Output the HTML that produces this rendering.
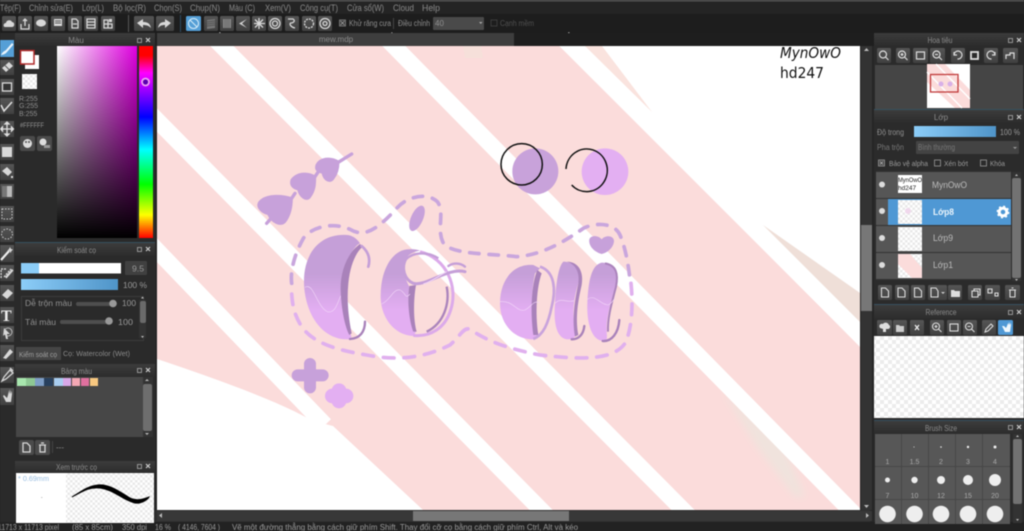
<!DOCTYPE html>
<html><head><meta charset="utf-8"><title>mew.mdp</title>
<style>
html,body{margin:0;padding:0;background:#242424;overflow:hidden;width:1024px;height:531px}
svg{display:block;position:absolute;left:0;top:0;filter:blur(.5px)}
text{font-family:"Liberation Sans","Noto Sans CJK SC",sans-serif;font-size:8.5px;fill:#8f8f8f}
.m{font-size:9px;fill:#8a8a8a}
.h{font-size:8px;fill:#8a8a8a;text-anchor:middle}
.i{fill:#d8d8d8}
.s{fill:none;stroke:#d8d8d8;stroke-width:1.3}
</style></head><body>
<svg width="1024" height="531" viewBox="0 0 1024 531" xmlns="http://www.w3.org/2000/svg">
<defs>
<pattern id="ck" width="8" height="8" patternUnits="userSpaceOnUse"><rect width="8" height="8" fill="#fff"/><rect width="4" height="4" fill="#ececec"/><rect x="4" y="4" width="4" height="4" fill="#ececec"/></pattern>
<pattern id="ck2" width="5" height="5" patternUnits="userSpaceOnUse"><rect width="5" height="5" fill="#fff"/><rect width="2.5" height="2.5" fill="#e8e8e8"/><rect x="2.5" y="2.5" width="2.5" height="2.5" fill="#e8e8e8"/></pattern>
<linearGradient id="sv1"><stop offset="0" stop-color="#fff"/><stop offset="1" stop-color="#e000e0"/></linearGradient>
<linearGradient id="sv2" x2="0" y2="1"><stop offset="0" stop-color="#000" stop-opacity="0"/><stop offset="1" stop-color="#000"/></linearGradient>
<linearGradient id="hue" x2="0" y2="1"><stop offset="0" stop-color="#f00"/><stop offset=".05" stop-color="#f00"/><stop offset=".14" stop-color="#f0f"/><stop offset=".37" stop-color="#00f"/><stop offset=".54" stop-color="#0ff"/><stop offset=".72" stop-color="#0f0"/><stop offset=".88" stop-color="#ff0"/><stop offset="1" stop-color="#f00"/></linearGradient>
<linearGradient id="blu"><stop offset="0" stop-color="#8ccdf8"/><stop offset="1" stop-color="#4f94c8"/></linearGradient>
<linearGradient id="hd" x2="0" y2="1"><stop offset="0" stop-color="#3c3c3c"/><stop offset="1" stop-color="#2c2c2c"/></linearGradient>
<linearGradient id="lil" gradientUnits="userSpaceOnUse" x1="0" y1="400" x2="0" y2="510"><stop offset="0" stop-color="#c59fd8"/><stop offset="1" stop-color="#e3aef2"/></linearGradient>
<linearGradient id="btn" x2="0" y2="1"><stop offset="0" stop-color="#555"/><stop offset="1" stop-color="#414141"/></linearGradient>
<filter id="sf" x="-30%" y="-30%" width="160%" height="160%"><feGaussianBlur stdDeviation="4"/></filter>
</defs>

<rect width="1024" height="531" fill="#262626"/>
<!-- menu -->
<rect width="1024" height="1.5" fill="#555"/>
<rect y="1.5" width="1024" height="12.5" fill="#242424"/>
<text class="m" x="0" y="11" textLength="21" lengthAdjust="spacingAndGlyphs">Tệp(F)</text>
<text class="m" x="29" y="11" textLength="44" lengthAdjust="spacingAndGlyphs">Chỉnh sửa(E)</text>
<text class="m" x="82" y="11" textLength="22" lengthAdjust="spacingAndGlyphs">Lớp(L)</text>
<text class="m" x="113" y="11" textLength="33" lengthAdjust="spacingAndGlyphs">Bộ lọc(R)</text>
<text class="m" x="154" y="11" textLength="28" lengthAdjust="spacingAndGlyphs">Chọn(S)</text>
<text class="m" x="190" y="11" textLength="30" lengthAdjust="spacingAndGlyphs">Chụp(N)</text>
<text class="m" x="229" y="11" textLength="26" lengthAdjust="spacingAndGlyphs">Màu (C)</text>
<text class="m" x="265" y="11" textLength="26" lengthAdjust="spacingAndGlyphs">Xem(V)</text>
<text class="m" x="300" y="11" textLength="38" lengthAdjust="spacingAndGlyphs">Công cụ(T)</text>
<text class="m" x="347" y="11" textLength="37" lengthAdjust="spacingAndGlyphs">Cửa sổ(W)</text>
<text class="m" x="393" y="11" textLength="21" lengthAdjust="spacingAndGlyphs">Cloud</text>
<text class="m" x="422" y="11" textLength="18" lengthAdjust="spacingAndGlyphs">Help</text>
<!-- toolbar -->
<rect y="14" width="1024" height="19" fill="#1d1d1d"/>
<g fill="url(#btn)">
<rect x="2" y="16" width="14" height="15" rx="1.5"/><rect x="18" y="16" width="14" height="15" rx="1.5"/><rect x="34" y="16" width="14" height="15" rx="1.5"/><rect x="51" y="16" width="14" height="15" rx="1.5"/><rect x="68" y="16" width="14" height="15" rx="1.5"/><rect x="84" y="16" width="14" height="15" rx="1.5"/><rect x="101" y="16" width="14" height="15" rx="1.5"/>
<rect x="134" y="16" width="20" height="15" rx="1.5"/><rect x="156" y="16" width="18" height="15" rx="1.5"/>
<rect x="204" y="16" width="14" height="15" rx="1.5"/><rect x="220" y="16" width="14" height="15" rx="1.5"/><rect x="236" y="16" width="14" height="15" rx="1.5"/><rect x="252" y="16" width="14" height="15" rx="1.5"/><rect x="268" y="16" width="14" height="15" rx="1.5"/><rect x="285" y="16" width="14" height="15" rx="1.5"/><rect x="302" y="16" width="14" height="15" rx="1.5"/><rect x="318" y="16" width="14" height="15" rx="1.5"/>
</g>
<rect x="128" y="15" width="1" height="17" fill="#555"/><rect x="180" y="15" width="1" height="17" fill="#2c4a60"/>
<rect x="186" y="16" width="15" height="15" rx="1.5" fill="#559fd6"/>
<circle cx="193.5" cy="23.5" r="5" fill="none" stroke="#d5ecfa" stroke-width="1"/><path d="M190 20l7 7" stroke="#d5ecfa" stroke-width="1"/>
<!-- toolbar icons -->
<path class="i" d="M5 27c-2 0-2-4 1-4 0-3 5-4 6-1 3 0 3 5 0 5z"/>
<path class="s" d="M21 24v5h8v-5M25 26v-7M23 21l2-2 2 2"/>
<ellipse class="i" cx="41" cy="23" rx="5" ry="3.6"/>
<path class="i" d="M54 19h8v7h-8z"/><path d="M55 21h6M55 23h6" stroke="#555" stroke-width="1"/>
<path class="s" d="M72 19h4l2 2v7h-6zM73 24h4"/>
<path class="s" d="M87 19h8v3h-8zM87 22h8v3h-8zM87 25h8v3h-8z"/>
<path class="s" d="M104 20h4v4h-4zM104 24h4v4h-4zM108 24h4v4h-4z"/><path class="i" d="M109 19h3v3h-3z"/>
<path class="i" d="M137 23l6-4v3c4 0 7 1 8 6-2-2-4-3-8-3v3z"/>
<path class="i" d="M171 23l-6-4v3c-4 0-6 1-7 6 2-2 3-3 7-3v3z"/>
<path d="M207 20l8-1v9l-8 1z" fill="#777"/><path d="M207 22l8-1M207 24l8-1M207 26l8-1" stroke="#555"/>
<path d="M223 19h8v9h-8z" fill="#888"/><path d="M225 19v9M227 19v9M229 19v9" stroke="#555" stroke-width=".6"/>
<path class="i" d="M247 19l-8 4.5 8 4.5-5-4.500z"/>
<path class="s" d="M259 18v11M254 23.5h11M255 19.5l8 8M263 19.5l-8 8" stroke-width="1"/>
<circle class="s" cx="275" cy="23.5" r="5"/><circle class="s" cx="275" cy="23.5" r="2.5"/>
<path class="s" d="M288 19h5c3 2 0 4-2 4s-1 4 4 5"/>
<circle cx="309" cy="23.5" r="4.5" fill="none" stroke="#d8d8d8" stroke-width="1.3" stroke-dasharray="2 1"/>
<circle class="s" cx="325" cy="23.5" r="5"/><circle class="s" cx="325" cy="23.5" r="2"/>
<rect x="339.5" y="20" width="6" height="6" fill="#333" stroke="#888" stroke-width=".8"/><path d="M340.5 21l4 4M344.5 21l-4 4" stroke="#aaa" stroke-width=".7"/>
<text x="349" y="26" style="font-size:8px" textLength="42" lengthAdjust="spacingAndGlyphs">Khử răng cưa</text>
<rect x="393" y="18" width="1" height="11" fill="#444"/>
<text x="398" y="26" style="font-size:8px" textLength="32" lengthAdjust="spacingAndGlyphs">Điều chỉnh</text>
<rect x="433" y="17" width="51" height="13" rx="1" fill="#4a4a4a"/>
<text x="435" y="26" style="font-size:8px">40</text><path d="M479 22h3.500l-1.750 2z" fill="#aaa"/>
<rect x="491" y="20" width="6" height="6" fill="none" stroke="#444" stroke-width=".8"/>
<text x="500" y="26" style="font-size:8px;fill:#505050" textLength="34" lengthAdjust="spacingAndGlyphs">Cạnh mềm</text>

<!-- CANVAS -->
<rect x="157" y="46" width="703" height="464" fill="#fff"/>
<path d="M157 46H563L860 347V510H423L333 426 313 421C285 405 235 385 157 359Z" fill="#fbdcdb"/>
<path d="M585 46H602L652 112Z" fill="#fae3de"/>
<path d="M763 225L860 293V322Z" fill="#efdfd8"/>
<path d="M722 390L785 447 805 497 795 497 757 447Z" fill="#f0e3dd" filter="url(#sf)"/>
<path d="M463 46H481L483 58 465 58Z" fill="#f6e0da"/>
<g stroke="#fff" stroke-width="16.5" fill="none">
<path d="M214 38L691 518"/>
<path d="M150 113L549 518"/>
<path d="M150 243L325 425"/>
<path d="M386 38L858 518"/>
<path d="M563 38L868 343"/>
</g>
<rect x="150" y="40" width="7" height="480" fill="#262626"/>
<rect x="860" y="40" width="14" height="480" fill="#262626"/>
<rect x="150" y="510" width="720" height="12" fill="#2f2f2f"/>
<!-- tab strip -->
<rect x="0" y="33" width="1024" height="13" fill="#1e1e1e"/>
<rect x="157" y="33" width="357" height="13" fill="#3e3e3e"/>
<text class="h" x="336" y="42">mew.mdp</text>

<text x="780" y="58" style="font-size:15px;fill:#111;font-family:'DejaVu Sans';font-style:italic" textLength="61" lengthAdjust="spacingAndGlyphs">MynOwO</text>
<text x="780" y="78" style="font-size:15px;fill:#111;font-family:'DejaVu Sans'" textLength="44" lengthAdjust="spacingAndGlyphs">hd247</text>

<!-- artwork in zoom coordinates -->
<g transform="translate(250 140) scale(.33333)">
<circle cx="856" cy="94" r="69" fill="#c8a2da"/>
<circle cx="815" cy="73" r="62" fill="none" stroke="#111" stroke-width="4.5"/>
<circle cx="1065" cy="95" r="70" fill="#e3aff2"/>
<path d="M948 87A62 64 0 1 1 965 135" fill="none" stroke="#111" stroke-width="4.5"/>
<g fill="#c7a1da" stroke="#c7a1da" stroke-width="7" stroke-linejoin="round">
<path d="M125 175C95 165 55 165 35 180 15 195 30 215 55 222 65 245 90 260 105 245 120 225 125 200 125 175Z"/>
<path d="M195 110C170 95 140 100 125 120 120 135 130 145 145 148 150 170 170 185 180 170 195 150 195 130 195 110Z"/>
<path d="M265 65C240 50 210 55 200 75 195 90 205 95 218 98 222 120 240 130 250 115 262 100 265 80 265 65Z"/>
</g>
<g fill="#c7a1da">
<path d="M1055 342C1030 335 1015 315 1018 298 1022 285 1045 285 1055 298 1065 285 1090 285 1092 302 1092 320 1075 338 1055 342Z"/>
<ellipse cx="501" cy="235" rx="18" ry="41" transform="rotate(24 501 235)"/>
</g>
<path d="M50 250L72 225M125 175L135 160M195 110L205 95M260 70L305 42" stroke="#c7a1da" stroke-width="10" stroke-linecap="round"/>
<path d="M180 672V742M143 706H218" stroke="#c7a1da" stroke-width="36" stroke-linecap="round"/>
<g fill="#e3aff2"><circle cx="267" cy="752" r="22"/><circle cx="267" cy="783" r="22"/><circle cx="247" cy="768" r="22"/><circle cx="288" cy="768" r="22"/></g>
<!-- dashed outline -->
<path d="M125 430C120 390 135 340 160 295 185 260 250 245 300 268 345 295 385 265 440 205 470 170 530 155 562 185 585 215 560 265 578 305 595 345 720 340 800 350 880 345 950 300 1000 265 1040 245 1095 250 1110 285 1125 320 1135 370 1140 420" fill="none" stroke="#c9a6dd" stroke-width="11" stroke-linecap="round" stroke-dasharray="28 30"/>
<path d="M1143 430C1150 500 1145 570 1125 610 1090 660 1000 660 870 645 770 625 715 605 660 568 640 560 630 590 600 615 530 650 450 665 350 645 260 630 190 610 155 560 130 520 127 490 125 460" fill="none" stroke="#e0b0ee" stroke-width="11" stroke-linecap="round" stroke-dasharray="32 30"/>
<!-- C -->
<path d="M290 285C210 280 160 340 162 430 165 520 215 600 295 598L305 590C280 540 265 450 285 385 295 350 315 315 330 310 320 295 305 285 290 285Z" fill="url(#lil)"/>
<path d="M330 312C290 340 270 400 272 450 274 510 285 560 298 585L305 580C295 530 290 480 295 430 300 380 315 340 338 320Z" fill="#a982ba"/>
<path d="M335 318C355 335 362 355 355 380" fill="none" stroke="#c59fd8" stroke-width="8" stroke-linecap="round"/>
<path d="M345 545C345 575 330 595 300 597" fill="none" stroke="#a982ba" stroke-width="7" stroke-linecap="round"/>
<!-- O -->
<path d="M470 328C420 335 390 400 392 475 394 530 430 585 490 588L498 575C480 560 470 490 478 440 468 420 455 395 462 365 470 345 490 335 510 332 500 328 485 326 470 328Z" fill="url(#lil)"/>
<path d="M478 438C470 490 480 550 490 575L500 575C490 540 490 480 498 435Z" fill="#a982ba"/>
<path d="M510 335C590 355 625 440 602 510 585 565 540 592 490 586" fill="none" stroke="#dcaaea" stroke-width="9"/>
<path d="M590 440C600 490 582 550 530 575" fill="none" stroke="#ab84bc" stroke-width="7"/>
<path d="M470 352C450 385 465 420 490 430 530 440 590 382 645 395" fill="none" stroke="#c59fd8" stroke-width="9" stroke-linecap="round"/>
<path d="M468 358C490 335 535 335 565 355" fill="none" stroke="#c59fd8" stroke-width="7"/>
<path d="M595 378C610 368 630 368 645 380" fill="none" stroke="#c59fd8" stroke-width="7" stroke-linecap="round"/>
<!-- a -->
<path d="M850 375C790 370 750 420 750 490 750 550 790 598 850 598L870 590C845 550 840 470 855 400L870 385Z" fill="url(#lil)"/>
<path d="M862 390C845 430 840 510 850 585L865 585C855 520 860 440 875 400Z" fill="#a982ba"/>
<path d="M870 380C915 395 918 450 905 500 895 550 880 585 850 597" fill="none" stroke="#c9a3dc" stroke-width="8"/>
<path d="M940 365C925 380 918 430 915 490 910 550 920 598 955 598 975 598 980 585 975 570 965 520 972 470 985 430 995 395 975 365 940 365Z" fill="url(#lil)"/>
<path d="M950 365C985 365 1002 395 995 435 985 480 975 530 985 585L975 590C965 530 975 480 985 430 990 395 975 372 950 365Z" fill="#ab84bc"/>
<path d="M1003 558C1000 585 985 598 965 598" fill="none" stroke="#a982ba" stroke-width="7" stroke-linecap="round"/>
<!-- i -->
<path d="M1055 368C1025 375 1015 420 1012 490 1010 550 1025 603 1062 603 1075 600 1070 590 1070 570 1068 530 1085 480 1098 430 1105 395 1090 368 1055 368Z" fill="url(#lil)"/>
<path d="M1065 370C1098 375 1106 400 1098 440 1088 480 1072 530 1074 575" fill="none" stroke="#ab84bc" stroke-width="6"/>
<path d="M1108 540C1105 580 1085 605 1058 603" fill="none" stroke="#a982ba" stroke-width="7" stroke-linecap="round"/>
<g fill="none" stroke="#f2d6f8" stroke-width="1.8">
<path d="M165 442C190 425 200 500 232 515 255 522 262 490 272 468"/>
<path d="M395 492C420 482 430 445 450 450 468 458 465 480 480 462"/>
<path d="M750 485C790 480 800 518 825 510 845 500 850 480 868 488"/>
<path d="M915 490C935 470 950 490 972 482M1012 478C1035 460 1050 495 1075 495 1085 490 1090 480 1095 475"/>
<path d="M520 432C545 425 570 405 590 395" stroke-width="3"/>
</g>
</g>

<!-- canvas scrollbars -->
<rect x="861" y="46" width="11" height="464" fill="#333"/>
<rect x="861" y="225" width="11" height="86" fill="#777"/>
<path d="M864 51h5l-2.5-3zM864 505h5l-2.5 3z" fill="#bbb"/>
<rect x="157" y="511" width="715" height="10" fill="#383838"/>
<rect x="413" y="511" width="156" height="10" fill="#777"/>
<path d="M162 513v5l-3-2.5zM866 513v5l3-2.5z" fill="#bbb"/>
<!-- status -->
<rect x="0" y="522" width="1024" height="9" fill="#222"/>
<text x="-2" y="530" style="font-size:8px;fill:#9a9a9a" textLength="61" lengthAdjust="spacingAndGlyphs">11713 x 11713 pixel</text>
<text x="72" y="530" style="font-size:8px;fill:#9a9a9a" textLength="41" lengthAdjust="spacingAndGlyphs">(85 x 85cm)</text>
<text x="122" y="530" style="font-size:8px;fill:#9a9a9a" textLength="25" lengthAdjust="spacingAndGlyphs">350 dpi</text>
<text x="155" y="530" style="font-size:8px;fill:#9a9a9a" textLength="16" lengthAdjust="spacingAndGlyphs">16 %</text>
<text x="178" y="530" style="font-size:8px;fill:#9a9a9a" textLength="42" lengthAdjust="spacingAndGlyphs">( 4146, 7604 )</text>
<text x="232" y="530" style="font-size:8px;fill:#9a9a9a" textLength="346" lengthAdjust="spacingAndGlyphs">Vẽ một đường thẳng bằng cách giữ phím Shift. Thay đổi cỡ cọ bằng cách giữ phím Ctrl, Alt và kéo</text>

<!-- LEFT TOOLS -->
<rect x="0" y="33" width="15" height="489" fill="#2a2a2a"/>
<g fill="url(#btn)">
<rect x="0" y="60" width="14" height="15"/><rect x="0" y="79" width="14" height="16"/><rect x="0" y="98" width="14" height="16"/><rect x="0" y="121" width="14" height="16"/><rect x="0" y="144" width="14" height="16"/><rect x="0" y="164" width="14" height="16"/><rect x="0" y="184" width="14" height="15"/><rect x="0" y="206" width="14" height="16"/><rect x="0" y="226" width="14" height="16"/><rect x="0" y="245" width="14" height="17"/><rect x="0" y="265" width="14" height="16"/><rect x="0" y="285" width="14" height="16"/><rect x="0" y="307" width="14" height="16"/><rect x="0" y="326" width="14" height="16"/><rect x="0" y="345" width="14" height="16"/><rect x="0" y="367" width="14" height="16"/><rect x="0" y="388" width="14" height="17"/>
</g>
<rect x="0" y="40" width="14" height="17" fill="#559fd6"/>
<path d="M1 55c2-4 4-4 5-5l6-7 1.500 1.500-6 7c-1 1-2 3-6.500 3.500z" fill="#e8f4fc"/>
<path d="M2 68l7-6 4 4-7 6z" class="i"/><path d="M5 65.500l4 4" stroke="#555"/>
<rect x="2.500" y="83" width="9" height="8" fill="#333" stroke="#ddd" stroke-width="1.300"/>
<path d="M1 105l3 6 8-9" fill="none" stroke="#ddd" stroke-width="1.600"/>
<path d="M7 123v12M1.500 129h11M7 122l-2 2h4zM7 136l-2-2h4zM0.500 129l2-2v4zM13.500 129l-2-2v4z" stroke="#ddd" fill="#ddd" stroke-width="1.300"/>
<rect x="2" y="147" width="10" height="10" class="i"/>
<path d="M2 171l5-4 5 5-4 4zM11 176h2v2h-2z" class="i"/>
<rect x="2" y="186" width="10" height="11" fill="#bbb"/><rect x="2" y="186" width="5" height="11" fill="#777"/>
<rect x="2" y="209" width="10" height="10" fill="none" stroke="#ccc" stroke-dasharray="1.500 1.500"/>
<ellipse cx="7" cy="234" rx="5.500" ry="5" fill="none" stroke="#ccc" stroke-dasharray="1.500 1.500"/>
<path d="M1 260l8-9" stroke="#eee" stroke-width="2.200"/><path d="M10 247l1 2 2 .5-1.500 1.500-1 2-1-2-2-.5 1.500-1.500z" class="i"/>
<path d="M1 278v-9h5M4 277l7-8" fill="none" stroke="#ddd" stroke-width="1.300" stroke-dasharray="2 1"/><path d="M5 277l7-8 1.500 1.500-7 8z" class="i"/>
<path d="M2 295l6-6 5 4-6 6z" class="i"/>
<text x="1" y="321" style="font-size:16px;font-weight:bold;fill:#eee;font-family:'Liberation Serif'">T</text>
<path d="M4 328l6 6-3 0 1 5-2 0-1-5-2 2z" class="i"/><circle cx="8" cy="332" r="4" fill="none" stroke="#ccc" stroke-width=".8"/>
<path d="M3 358l7-9 3 3-7 7z" class="i"/>
<path d="M2 381l2-4 6-7 3 3-7 6zM10 368l3 3" class="s"/>
<path d="M3 396l3 6h5l1-8v-3l-1 3v-4l-1 4v-5l-1 5v-4l-1 5-1 3-3-3z" class="i"/>

<!-- LEFT PANELS -->
<rect x="15" y="33" width="140" height="209" fill="#2a2a2a"/>
<rect x="15" y="33" width="140" height="13" fill="url(#hd)"/>
<text class="h" x="76" y="43">Màu</text>
<rect x="137.500" y="38.500" width="4" height="4" fill="none" stroke="#aaa" stroke-width=".8"/>
<path d="M146 38l4 4M150 38l-4 4" stroke="#ccc" stroke-width="1.2"/>
<rect x="25" y="55" width="14" height="14" fill="#fff"/>
<rect x="20.500" y="50.500" width="13.500" height="13.500" fill="#fff" stroke="#b02a2a" stroke-width="1.500"/>
<rect x="22" y="74" width="15" height="15" fill="url(#ck2)"/>
<text x="19" y="101" style="font-size:7px">R:255</text><text x="19" y="108" style="font-size:7px">G:255</text><text x="19" y="116" style="font-size:7px">B:255</text>
<text x="20" y="127.500" style="font-size:7px" textLength="24" lengthAdjust="spacingAndGlyphs">#FFFFFF</text>
<rect x="20" y="136" width="15" height="15" rx="2" fill="#4b4b4b"/><rect x="37" y="136" width="15" height="15" rx="2" fill="#4b4b4b"/>
<circle cx="27.500" cy="143.500" r="4.500" fill="#ddd"/><circle cx="26" cy="142" r="1" fill="#555"/><circle cx="29" cy="142" r="1" fill="#555"/><circle cx="43" cy="142" r="3.500" fill="#ddd"/><rect x="44" y="145" width="6" height="3" fill="#999"/>
<rect x="57" y="46" width="80" height="192" fill="url(#sv1)"/><rect x="57" y="46" width="80" height="192" fill="url(#sv2)"/>
<rect x="139" y="46" width="14" height="192" fill="url(#hue)"/>
<circle cx="145.500" cy="82" r="3.500" fill="#5a00b0" stroke="#f0a0f4" stroke-width="1.800"/>

<!-- brush control -->
<rect x="15" y="242" width="140" height="120" fill="#2a2a2a"/>
<rect x="15" y="243" width="140" height="13" fill="url(#hd)"/>
<rect x="15" y="242" width="140" height="1" fill="#36505f"/>
<text class="h" x="76.500" y="253" textLength="39" lengthAdjust="spacingAndGlyphs">Kiểm soát cọ</text>
<rect x="137.500" y="247.500" width="4" height="4" fill="none" stroke="#aaa" stroke-width=".8"/><path d="M146 247l4 4M150 247l-4 4" stroke="#ccc" stroke-width="1.2"/>
<rect x="21" y="263" width="100" height="10.500" fill="#fff"/><rect x="21" y="263" width="18" height="10.500" fill="#8ccdf8"/>
<rect x="125" y="261" width="22" height="14" rx="1" fill="#404040"/>
<text x="132" y="271.500" style="font-size:8.500px;fill:#999" textLength="12" lengthAdjust="spacingAndGlyphs">9.5</text>
<rect x="21" y="279" width="97" height="11" fill="url(#blu)"/>
<text x="123" y="288" style="font-size:8.500px;fill:#999" textLength="24" lengthAdjust="spacingAndGlyphs">100 %</text>
<rect x="21.500" y="296.500" width="122" height="44" fill="none" stroke="#3c3c3c"/>
<text x="25" y="306" style="font-size:8.500px;fill:#909090" textLength="47" lengthAdjust="spacingAndGlyphs">Dễ trộn màu</text>
<rect x="76" y="302" width="38" height="4" rx="2" fill="#4e4e4e"/><circle cx="113" cy="303.500" r="3.800" fill="#999"/>
<text x="122" y="306" style="font-size:8.500px;fill:#999" textLength="14" lengthAdjust="spacingAndGlyphs">100</text>
<text x="25" y="325" style="font-size:8.500px;fill:#909090" textLength="31" lengthAdjust="spacingAndGlyphs">Tải màu</text>
<rect x="60" y="320" width="48" height="4" rx="2" fill="#4e4e4e"/><circle cx="109" cy="321" r="3.800" fill="#999"/>
<text x="118" y="325" style="font-size:8.500px;fill:#999" textLength="15" lengthAdjust="spacingAndGlyphs">100</text>
<rect x="139" y="300" width="7" height="38" fill="#333"/><rect x="140" y="301" width="6" height="22" rx="2" fill="#6a6a6a"/>
<path d="M141 298.500h3l-1.500-2zM141 336h3l-1.500 2z" fill="#bbb"/>
<rect x="16" y="347" width="45" height="13" fill="#454545"/>
<text x="19" y="357" style="font-size:7.500px;fill:#a0a0a0" textLength="38" lengthAdjust="spacingAndGlyphs">Kiểm soát cọ</text>
<text x="63" y="356" style="font-size:7.500px;fill:#8a8a8a" textLength="67" lengthAdjust="spacingAndGlyphs">Cọ: Watercolor (Wet)</text>

<!-- palette -->
<rect x="15" y="362" width="140" height="99" fill="#2a2a2a"/>
<rect x="15" y="364" width="140" height="13" fill="url(#hd)"/>
<text class="h" x="76.500" y="374" textLength="31" lengthAdjust="spacingAndGlyphs">Bảng màu</text>
<rect x="137.500" y="368.500" width="4" height="4" fill="none" stroke="#aaa" stroke-width=".8"/><path d="M146 368l4 4M150 368l-4 4" stroke="#ccc" stroke-width="1.2"/>
<rect x="16" y="377" width="127" height="60" fill="#474747"/>
<rect x="17" y="378" width="9" height="8" fill="#a8e6ae"/><rect x="26" y="378" width="9" height="8" fill="#8ec894"/><rect x="35" y="378" width="9" height="8" fill="#7e9ec6"/><rect x="44" y="378" width="9" height="8" fill="#28405e"/><rect x="54" y="378" width="9" height="8" fill="#a8cdf0"/><rect x="63" y="378" width="8" height="8" fill="#d8a8e8"/><rect x="72" y="378" width="8" height="8" fill="#f4a8b4"/><rect x="81" y="378" width="8" height="8" fill="#e0709e"/><rect x="90" y="378" width="8" height="8" fill="#f8c880"/>
<rect x="143" y="377" width="10" height="60" fill="#333"/><rect x="143" y="384" width="9" height="47" rx="2" fill="#6e6e6e"/>
<path d="M145 381h4l-2-2zM145 433h4l-2 2z" fill="#bbb"/>
<rect x="19" y="440" width="15" height="15" rx="2" fill="#4b4b4b"/><rect x="35" y="440" width="15" height="15" rx="2" fill="#4b4b4b"/>
<path class="s" d="M23 443h4l3 3v6h-7z"/><path class="s" d="M39 445h7M40 445v7h5v-7M41 443h3"/>
<rect x="52" y="441" width="1" height="12" fill="#444"/>
<text x="56" y="450" style="font-size:8px">---</text>

<!-- preview -->
<rect x="15" y="461" width="140" height="61" fill="#2a2a2a"/>
<rect x="15" y="461" width="140" height="12" fill="url(#hd)"/>
<text class="h" x="76.500" y="470" textLength="41" lengthAdjust="spacingAndGlyphs">Xem trước cọ</text>
<rect x="137.500" y="464.500" width="4" height="4" fill="none" stroke="#aaa" stroke-width=".8"/><path d="M146 464l4 4M150 464l-4 4" stroke="#ccc" stroke-width="1.2"/>
<rect x="16" y="473" width="50" height="50" fill="#fff"/>
<rect x="66" y="473" width="88" height="50" fill="url(#ck2)"/>
<text x="18" y="481" style="font-size:7.500px;fill:#98bde0" textLength="31" lengthAdjust="spacingAndGlyphs">* 0.69mm</text>
<rect x="41" y="497" width="1.500" height="1" fill="#ccc"/>
<path d="M72 497C85 490 90 487 100 488 115 490 122 500 135 503 142 504 148 499 149 497 142 500 136 501 130 498 120 492 110 484 98 485 88 486 82 491 72 497Z" fill="#000" stroke="#000" stroke-width="1"/>

<!-- RIGHT -->
<rect x="874" y="33" width="150" height="489" fill="#2b2b2b"/>
<rect x="874" y="33" width="150" height="13" fill="url(#hd)"/>
<text class="h" x="940" y="43" textLength="25" lengthAdjust="spacingAndGlyphs">Hoa tiêu</text>
<rect x="1008.500" y="38.500" width="4" height="4" fill="none" stroke="#aaa" stroke-width=".8"/><path d="M1017 38l4 4M1021 38l-4 4" stroke="#ccc" stroke-width="1.2"/>
<g fill="url(#btn)">
<rect x="877" y="48" width="14" height="15" rx="1.500"/><rect x="896" y="48" width="14" height="15" rx="1.500"/><rect x="913" y="48" width="15" height="15" rx="1.500"/><rect x="930" y="48" width="15" height="15" rx="1.500"/><rect x="951" y="48" width="14" height="15" rx="1.500"/><rect x="984" y="48" width="14" height="15" rx="1.500"/><rect x="1003" y="48" width="15" height="15" rx="1.500"/>
</g>
<rect x="967" y="48" width="15" height="15" rx="1.500" fill="#2a2a2a"/>
<g fill="none" stroke="#ddd" stroke-width="1.2">
<circle cx="883" cy="54.500" r="3.500"/><path d="M885.500 57l3 3"/>
<circle cx="902" cy="54.500" r="3.500"/><path d="M904.500 57l3 3M900.500 54.500h3M902 53v3"/>
<rect x="916.500" y="52" width="8" height="7"/>
<circle cx="936.500" cy="54.500" r="3.500"/><path d="M939 57l3 3M935 54.500h3"/>
<path d="M954 55a4 4 0 1 1 3.500 4M954 52v3h3"/>
<rect x="971" y="52" width="7" height="7" stroke-width="1.800"/>
<path d="M995 55a4 4 0 1 0-3.500 4M995 52v3h-3"/>
<path d="M1006 59v-4h4v-2h4v6"/>
</g>
<rect x="875" y="65" width="148" height="44" fill="#454545"/>
<rect x="927" y="64" width="43" height="44" fill="#fff"/>
<path d="M927 64H945L970 90V108H955L927 82Z" fill="#fbdcdb"/>
<path d="M936 64L970 99M927 72L962 108" stroke="#fff" stroke-width="1.500"/>
<rect x="930.500" y="74.500" width="27.500" height="17.500" fill="none" stroke="#c03a3a" stroke-width="1.300"/>
<circle cx="941" cy="84" r="2.500" fill="#d8b0e8"/><circle cx="950" cy="84" r="2.500" fill="#d8b0e8"/>

<rect x="874" y="109" width="150" height="1" fill="#36505f"/>
<rect x="874" y="110" width="150" height="13" fill="url(#hd)"/>
<text class="h" x="941" y="120">Lớp</text>
<rect x="1008.500" y="115.500" width="4" height="4" fill="none" stroke="#aaa" stroke-width=".8"/><path d="M1017 115l4 4M1021 115l-4 4" stroke="#ccc" stroke-width="1.2"/>
<text x="877" y="135" style="font-size:8px" textLength="27" lengthAdjust="spacingAndGlyphs">Độ trong</text>
<rect x="914" y="126" width="82" height="11" fill="url(#blu)"/>
<text x="1000" y="135" style="font-size:8px;fill:#999" textLength="20" lengthAdjust="spacingAndGlyphs">100 %</text>
<text x="877" y="150" style="font-size:8px;fill:#777" textLength="27" lengthAdjust="spacingAndGlyphs">Pha trộn</text>
<rect x="916" y="141" width="103" height="13" rx="1" fill="#434343"/>
<text x="918" y="150" style="font-size:8px;fill:#777" textLength="37" lengthAdjust="spacingAndGlyphs">Bình thường</text><path d="M1013 147h4l-2 2z" fill="#999"/>
<rect x="878.500" y="160" width="6" height="6" fill="#444" stroke="#999" stroke-width=".8"/><path d="M880 161.500l3 3M883 161.500l-3 3" stroke="#bbb" stroke-width=".7"/>
<text x="889" y="166" style="font-size:7.500px;fill:#999" textLength="39" lengthAdjust="spacingAndGlyphs">Bảo vệ alpha</text>
<rect x="934.500" y="160" width="6" height="6" fill="none" stroke="#999" stroke-width=".8"/>
<text x="944" y="166" style="font-size:7.500px;fill:#999" textLength="24" lengthAdjust="spacingAndGlyphs">Xén bớt</text>
<rect x="980.500" y="160" width="6" height="6" fill="none" stroke="#999" stroke-width=".8"/>
<text x="990" y="166" style="font-size:7.500px;fill:#999" textLength="15" lengthAdjust="spacingAndGlyphs">Khóa</text>

<rect x="876" y="171" width="135" height="109" fill="#333"/>
<rect x="876" y="172" width="135" height="26" fill="#565656"/>
<rect x="876" y="199" width="12" height="26" fill="#565656"/>
<rect x="888" y="199" width="123" height="26" fill="#4f98d4"/>
<rect x="876" y="226" width="135" height="26" fill="#565656"/>
<rect x="876" y="253" width="135" height="26" fill="#565656"/>
<circle cx="882" cy="184.500" r="3" fill="#ddd"/><circle cx="882" cy="211" r="3" fill="#ddd"/><circle cx="882" cy="238" r="3" fill="#ddd"/><circle cx="882" cy="265" r="3" fill="#ddd"/>
<rect x="898" y="175" width="24" height="18" fill="#fff"/>
<text x="898" y="182" style="font-size:6px;fill:#222" textLength="24" lengthAdjust="spacingAndGlyphs">MynOwO</text>
<text x="898" y="190" style="font-size:6.500px;fill:#222">hd247</text>
<rect x="898" y="200" width="24" height="24" fill="url(#ck2)"/><circle cx="908" cy="211" r="3" fill="#f0d8ec"/>
<rect x="898" y="227" width="24" height="24" fill="url(#ck2)"/>
<rect x="898" y="254" width="24" height="24" fill="url(#ck2)"/><path d="M898 254H910L922 268V278H912L898 264Z" fill="#fbdcdb"/>
<text x="932" y="188" style="font-size:9px;fill:#bbb" textLength="35" lengthAdjust="spacingAndGlyphs">MynOwO</text>
<text x="933" y="215" style="font-size:9px;font-weight:bold;fill:#eaf4fb" textLength="21" lengthAdjust="spacingAndGlyphs">Lớp8</text>
<text x="933" y="241" style="font-size:9px;fill:#bbb" textLength="20" lengthAdjust="spacingAndGlyphs">Lớp9</text>
<text x="933" y="268" style="font-size:9px;fill:#bbb" textLength="20" lengthAdjust="spacingAndGlyphs">Lớp1</text>
<circle cx="1003" cy="212" r="3.800" fill="none" stroke="#fff" stroke-width="3"/>
<circle cx="1003" cy="212" r="5.600" fill="none" stroke="#fff" stroke-width="1.600" stroke-dasharray="2 2.400"/>
<rect x="1012" y="172" width="9" height="109" fill="#333"/><rect x="1012" y="178" width="9" height="100" rx="2" fill="#727272"/>
<path d="M1015 176h3l-1.500-2zM1015 279h3l-1.500 2z" fill="#bbb"/>
<g fill="url(#btn)">
<rect x="878" y="285" width="14" height="15" rx="1.500"/><rect x="895" y="285" width="14" height="15" rx="1.500"/><rect x="911" y="285" width="14" height="15" rx="1.500"/><rect x="928" y="285" width="19" height="15" rx="1.500"/><rect x="948" y="285" width="14" height="15" rx="1.500"/><rect x="968" y="285" width="14" height="15" rx="1.500"/><rect x="985" y="285" width="15" height="15" rx="1.500"/><rect x="1005" y="285" width="15" height="15" rx="1.500"/>
</g>
<g fill="none" stroke="#ddd" stroke-width="1.100">
<path d="M881.500 288h4l3 3v6h-7z"/><path d="M898 288h4l3 3v6h-7z"/><path d="M914.500 288h4l3 3v6h-7z"/><path d="M931 288h5l2 3v6h-7z"/>
<path d="M972 291h6v6h-6zM974 291v-2h6v6h-2"/><path d="M988 289h4v4h-4zM995 293h3v3h-3z"/>
<path d="M1009 290h7M1010 290v7h5v-7M1011.500 288h2"/>
</g>
<path d="M951 290h3l1 1h5v6h-9z" fill="#ddd"/><path d="M941 292h4l-2 2z" fill="#ccc"/>

<rect x="874" y="304" width="150" height="1" fill="#36505f"/>
<rect x="874" y="305" width="150" height="14" fill="url(#hd)"/>
<text class="h" x="941" y="315" textLength="31" lengthAdjust="spacingAndGlyphs">Reference</text>
<rect x="1008.500" y="310.500" width="4" height="4" fill="none" stroke="#aaa" stroke-width=".8"/><path d="M1017 310l4 4M1021 310l-4 4" stroke="#ccc" stroke-width="1.2"/>
<g fill="url(#btn)">
<rect x="877" y="320" width="15" height="15" rx="1.500"/><rect x="893" y="320" width="14" height="15" rx="1.500"/><rect x="910" y="320" width="14" height="15" rx="1.500"/><rect x="930" y="320" width="14" height="15" rx="1.500"/><rect x="947" y="320" width="14" height="15" rx="1.500"/><rect x="963" y="320" width="14" height="15" rx="1.500"/><rect x="982" y="320" width="14" height="15" rx="1.500"/>
</g>
<rect x="998" y="320" width="15" height="15" rx="1.500" fill="#4f98d4"/>
<path d="M880 328c-2-3 1-5 3-4 1-2 5-2 6 1 2 1 1 4-1 4h-2v3h-3v-3z" fill="#ddd"/>
<path d="M896 325h3l1 1h4v6h-8z" fill="#ccc"/>
<path d="M915 325l4 5M919 325l-4 5" stroke="#eee" stroke-width="1.300"/>
<g fill="none" stroke="#ddd" stroke-width="1.100">
<circle cx="936" cy="326.500" r="3.500"/><path d="M938.500 329l3 3M934.500 326.500h3M936 325v3"/>
<rect x="950" y="324" width="8" height="7"/>
<circle cx="969" cy="326.500" r="3.500"/><path d="M971.500 329l3 3M967.500 326.500h3"/>
<path d="M985 332l1-3 5-5 2 2-5 5z"/>
</g>
<path d="M1002 326l3 6h5l1-7v-2l-1 2v-3l-1 3v-3l-1 3v-2l-1 3-1 2-2-2z" fill="#eef7fd"/>
<rect x="874" y="336" width="150" height="82" fill="url(#ck)"/>

<rect x="874" y="420" width="150" height="1" fill="#36505f"/>
<rect x="874" y="421" width="150" height="13" fill="url(#hd)"/>
<text class="h" x="941" y="431" textLength="32" lengthAdjust="spacingAndGlyphs">Brush Size</text>
<rect x="1008.500" y="425.500" width="4" height="4" fill="none" stroke="#aaa" stroke-width=".8"/><path d="M1017 425l4 4M1021 425l-4 4" stroke="#ccc" stroke-width="1.2"/>
<rect x="875" y="434" width="135" height="90" fill="#575757"/>
<path d="M901.500 434V524M928.500 434V524M955.500 434V524M982.500 434V524M875 466.500H1010M875 499.500H1010" stroke="#474747" stroke-width="1"/>
<g fill="#eee">
<circle cx="914" cy="447" r=".5"/><circle cx="941" cy="447" r=".8"/><circle cx="968" cy="447" r="1.200"/><circle cx="995" cy="447" r="1.500"/>
<circle cx="887.500" cy="480" r="2.500"/><circle cx="914.500" cy="480" r="3.200"/><circle cx="941" cy="480" r="4"/><circle cx="968" cy="480" r="5"/><circle cx="995" cy="480" r="6"/>
<circle cx="887.500" cy="514" r="8.300"/><circle cx="914.500" cy="514" r="8.300"/><circle cx="941" cy="514" r="8.300"/><circle cx="968" cy="514" r="8.300"/><circle cx="995" cy="514" r="8.300"/>
</g>
<text x="887.500" y="464" style="font-size:7px;fill:#aaa;text-anchor:middle">1</text><text x="914.500" y="464" style="font-size:7px;fill:#aaa;text-anchor:middle">1.5</text><text x="941" y="464" style="font-size:7px;fill:#aaa;text-anchor:middle">2</text><text x="968" y="464" style="font-size:7px;fill:#aaa;text-anchor:middle">3</text><text x="995" y="464" style="font-size:7px;fill:#aaa;text-anchor:middle">4</text>
<text x="887.500" y="498" style="font-size:7px;fill:#aaa;text-anchor:middle">7</text><text x="914.500" y="498" style="font-size:7px;fill:#aaa;text-anchor:middle">10</text><text x="941" y="498" style="font-size:7px;fill:#aaa;text-anchor:middle">12</text><text x="968" y="498" style="font-size:7px;fill:#aaa;text-anchor:middle">15</text><text x="995" y="498" style="font-size:7px;fill:#aaa;text-anchor:middle">20</text>
<rect x="1013" y="434" width="9" height="89" fill="#333"/><rect x="1013" y="439" width="9" height="65" rx="2" fill="#727272"/>
<path d="M1016 437h3l-1.500-2zM1016 519h3l-1.500 2z" fill="#bbb"/>
<rect x="874" y="524" width="150" height="7" fill="#222"/>
</svg>
</body></html>
